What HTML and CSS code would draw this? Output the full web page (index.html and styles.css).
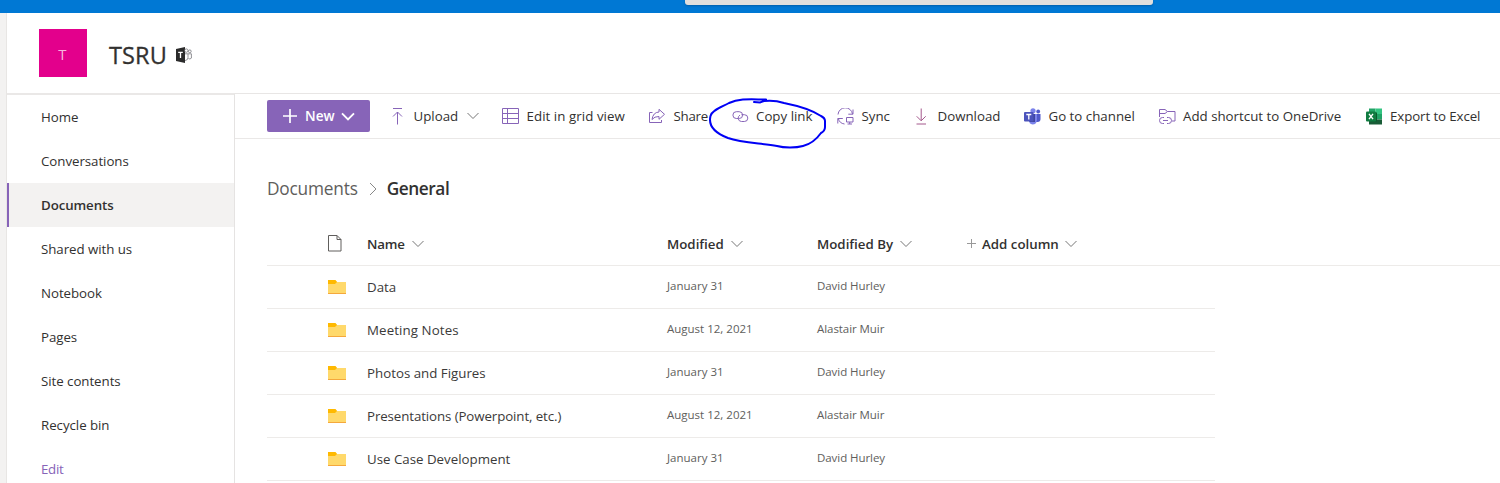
FILE: index.html
```html
<!DOCTYPE html>
<html lang="en">
<head>
<meta charset="utf-8">
<title>TSRU - Documents</title>
<link rel="stylesheet" href="styles.css">
</head>
<body>
<svg class="defs" width="0" height="0">
  <symbol id="chev" viewBox="0 0 12 8"><path d="M.5 1 6 6.5 11.5 1" fill="none" stroke="currentColor"/></symbol>
  <symbol id="folder" viewBox="0 0 18 14"><path d="M0 1.5H18V13H0z" fill="#ffd96b"/><path d="M0 13h18v1H0z" fill="#f5a83c"/><path d="M9 0h9v2H9z" fill="#fff"/><path d="M0 0h7.500l1.500 2-2 2H0z" fill="#ffb900"/></symbol>
</svg>
<div class="suite"><div class="search"></div></div>
<div class="app">
  <div class="rail"></div>
  <div class="site">
    <header class="head">
      <div class="logo">T</div>
      <h1 class="title">TSRU</h1>
      <svg class="teamsmark" width="16" height="16" viewBox="0 0 16 16"><path d="M0 2 9 0v16L0 14z" fill="#2b2b2b"/><path d="M2.2 5.3h4.6M4.5 5v6" stroke="#fff" stroke-width="1.3"/><g fill="none" stroke="#77777c" stroke-width=".8"><circle cx="10.3" cy="3.6" r="1.7"/><circle cx="13.8" cy="4.3" r="1.4"/><path d="M9 6.8h6.4v4.3q-1.4 1.6-3 .4M9 13.6q3-.4 3-3V7"/></g></svg>
    </header>
    <div class="body">
      <nav class="nav">
        <a class="item">Home</a>
        <a class="item">Conversations</a>
        <a class="item active">Documents</a>
        <a class="item">Shared with us</a>
        <a class="item">Notebook</a>
        <a class="item">Pages</a>
        <a class="item">Site contents</a>
        <a class="item">Recycle bin</a>
        <a class="item edit">Edit</a>
      </nav>
      <main class="main">
        <div class="bar">
          <button class="new"><svg width="16" height="16" viewBox="0 0 16 16"><path d="M8 1v14M1 8h14" stroke="#fff" stroke-width="1.7"/></svg><span>New</span><svg width="14" height="9" viewBox="0 0 14 9"><path d="M1 1.3 7 7.3 13 1.3" fill="none" stroke="#fff" stroke-width="1.9"/></svg></button>
          <div class="cmd"><svg class="ic" viewBox="0 0 17 17"><path d="M4 .5h9M8.500 16.500V4M4 8.500 8.500 4 13 8.500"/></svg><span>Upload</span><svg class="chev" width="12" height="8"><use href="#chev"/></svg></div>
          <div class="cmd"><svg class="ic" viewBox="0 0 17 17"><path d="M.5 .5h16v15H.5zM.5 5.500h16M.5 10.500h16M5.500 .5v15"/></svg><span class="t-grid">Edit in grid view</span></div>
          <div class="cmd"><svg class="ic" viewBox="0 0 17 17"><path d="M3.500 4.500H.5v10h12V12M10 1.300l5.500 5-5.500 5V8.500Q5.500 8.300 3 11.500 4 4.300 10 4z"/></svg><span class="t-share">Share</span></div>
          <div class="cmd"><svg class="ic" viewBox="0 0 17 17"><path d="M6.500 10.500H4.300a3.400 3.400 0 0 1 0-6.800h2.900a3.400 3.400 0 0 1 0 6.800M9.500 6.700h2.900a3.400 3.400 0 0 1 0 6.800H9.500a3.400 3.400 0 0 1-1.500-6.400"/></svg><span class="t-copy">Copy link</span></div>
          <div class="cmd"><svg class="ic" viewBox="0 0 17 17"><path d="M1 6.500A7.300 7.300 0 0 1 15.500 6M16 1.500v4.700h-4.700M7.500 16A7.300 7.300 0 0 1 1.300 10.500M.8 15.500v-5h5M9.500 9.500h6.500v4.500H9.500zM10.500 16h4.500M12.700 14v2"/></svg><span>Sync</span></div>
          <div class="cmd"><svg class="ic rose" viewBox="0 0 17 17"><path d="M3.500 16h9.500M8.200 .5v12M3.700 8.300l4.500 4.500 4.500-4.500"/></svg><span>Download</span></div>
          <div class="cmd"><svg class="ic solid" viewBox="0 0 17 17"><circle cx="9" cy="2.800" r="2.600" fill="#7b83eb"/><circle cx="14.200" cy="3.500" r="1.900" fill="#5059c9"/><path d="M11 6h5.500v5q0 3-3 3H11z" fill="#5059c9"/><path d="M5 6h8v6q-.5 4.500-4.500 4.500Q5 16 5 12z" fill="#7b83eb"/><path d="M5 6h6v8H5.500z" fill="#3f469f"/><rect x="0" y="4" width="9.500" height="9.500" rx="1" fill="#4b53bc"/><path d="M2.300 6.500h5M4.800 6.500v5" stroke="#fff" stroke-width="1.300"/></svg><span>Go to channel</span></div>
          <div class="cmd"><svg class="ic" viewBox="0 0 17 17"><path d="M.5 9V1.500H6L8.500 3.500H16v9.500h-3M.5 5.500H6L8.500 3.500M5 9.500H3.500a3 3 0 0 0 0 6H5M8 9.500h1.500a3 3 0 0 1 0 6H8M4 12.500h5"/></svg><span class="t-short">Add shortcut to OneDrive</span></div>
          <div class="cmd"><svg class="ic solid" viewBox="0 0 17 17"><path d="M3 .5h6.500V6H3z" fill="#21a366"/><path d="M9.500 .5H16V6H9.500z" fill="#33c481"/><path d="M3 6h6.500v5.500H3z" fill="#107c41"/><path d="M9.500 6H16v5.500H9.500z" fill="#21a366"/><path d="M3 11.500h13v5H3z" fill="#185c37"/><path d="M5 4.500h6v9H5z" fill="#0b5a2e"/><rect x="0" y="3.500" width="10" height="10" rx="1" fill="#107c41"/><path d="M3 5.800 7 11.200M7 5.800 3 11.200" stroke="#fff" stroke-width="1.400"/></svg><span class="t-excel">Export to Excel</span></div>
          <svg class="ink" width="122" height="54" viewBox="0 0 122 54"><path d="M46 6L52 6.500 56 5C64 4 70 5 76 7C91 10 104 14 113 20Q117 22 117 25V31Q117 35 113 37C108 44 103 48 95 50C88 52 76 52 69 50C52 47 34 47 20 42C7 37 0 30 2.500 20C4 14 14 11 21 7C32 2 44 3.500 58 3.500"/></svg>
        </div>
        <div class="crumb"><span>Documents</span><svg width="8" height="14" viewBox="0 0 8 14"><path d="M1 1l6 6-6 6" fill="none" stroke="#888"/></svg><b>General</b></div>
        <div class="row hrow">
          <svg class="fi" width="14" height="17" viewBox="0 0 14 17"><path d="M.5 .5h8.500l4 4v11.500H.5zM9 .5v4h4" fill="none" stroke="#605e5c"/></svg>
          <div class="h"><span class="t-name">Name</span><svg width="12" height="8"><use href="#chev"/></svg></div>
          <div class="h"><span>Modified</span><svg width="12" height="8"><use href="#chev"/></svg></div>
          <div class="h"><span>Modified By</span><svg width="12" height="8"><use href="#chev"/></svg></div>
          <div class="h h-add"><svg width="9" height="9" viewBox="0 0 9 9"><path d="M4.500 0v9M0 4.500h9" stroke="#999"/></svg><span>Add column</span><svg width="12" height="8"><use href="#chev"/></svg></div>
        </div>
        <div class="row"><svg class="fi" width="18" height="14"><use href="#folder"/></svg><span class="name">Data</span><span class="meta">January 31</span><span class="meta by">David Hurley</span></div>
        <div class="row"><svg class="fi" width="18" height="14"><use href="#folder"/></svg><span class="name wide">Meeting Notes</span><span class="meta">August 12, 2021</span><span class="meta by">Alastair Muir</span></div>
        <div class="row"><svg class="fi" width="18" height="14"><use href="#folder"/></svg><span class="name">Photos and Figures</span><span class="meta">January 31</span><span class="meta by">David Hurley</span></div>
        <div class="row"><svg class="fi" width="18" height="14"><use href="#folder"/></svg><span class="name long">Presentations (Powerpoint, etc.)</span><span class="meta">August 12, 2021</span><span class="meta by">Alastair Muir</span></div>
        <div class="row"><svg class="fi" width="18" height="14"><use href="#folder"/></svg><span class="name">Use Case Development</span><span class="meta">January 31</span><span class="meta by">David Hurley</span></div>
      </main>
    </div>
  </div>
</div>
</body>
</html>
```
FILE: styles.css
```css
* { box-sizing: border-box; }
body { margin: 0; height: 483px; overflow: hidden; background: #fff; color: #323130; font: 13.3px/20px "Open Sans", "Noto Sans", sans-serif; white-space: nowrap; }
.defs { position: absolute; }
svg { flex: none; display: block; }
.suite { height: 13px; background: #0078d4; padding-left: 685px; }
.search { width: 468px; height: 5px; background: #e1dfdd; border-radius: 0 0 3px 3px; box-shadow: 0 1px 2px #0060ac; }
.app { display: flex; height: 470px; }
.rail { width: 7px; background: #f3f2f1; border-right: 1px solid #e8e6e4; }
.site { flex: 1; }
.head { height: 80px; display: flex; align-items: center; padding-left: 32px; }
.logo { width: 48px; height: 48px; background: #e3008c; color: #f6b4dc; font-size: 15px; display: flex; align-items: center; justify-content: center; padding: 2px 1px 0 0; }
.title { margin: 3px 0 0 22px; width: 67px; font-size: 23.5px; line-height: 32px; font-weight: 500; letter-spacing: .1px; color: #323130; -webkit-text-stroke: .3px #323130; }
.teamsmark { margin-top: 4px; }
.body { display: flex; height: 390px; }
.nav { width: 228px; border-top: 2px solid #eae8e7; border-right: 1px solid #e5e3e2; }
.item { display: flex; align-items: center; height: 44px; padding-left: 34px; letter-spacing: -.05px; }
.active { background: #f3f2f1; border-left: 2px solid #8764b8; padding-left: 32px; font-weight: 600; letter-spacing: -.1px; }
.edit { color: #8764b8; letter-spacing: -.3px; }
.main { flex: 1; border-top: 1px solid #e8e6e5; }
.bar { position: relative; height: 45px; border-bottom: 1px solid #eae8e7; padding-left: 32px; display: grid; grid-template-columns: 122px 113px 147px 83px 105px 76px 111px 135px 207px 1fr; align-items: center; }
.new { width: 103px; height: 32px; border: 0; border-radius: 2px; background: #8764b8; color: #fff; font: 600 13.6px/20px "Open Sans", sans-serif; padding: 0 0 0 15px; display: flex; align-items: center; gap: 7px; }
.new span { width: 29px; }
.cmd { display: flex; align-items: center; }
.cmd span { margin-left: 7.5px; }
.cmd .t-grid { letter-spacing: .06px; }
.cmd .t-share { letter-spacing: -.25px; }
.cmd .t-copy { margin-left: 7px; }
.cmd .t-short { margin-left: 7px; }
.cmd .t-excel { margin-left: 7px; letter-spacing: -.1px; }
.ic { width: 17px; height: 17px; fill: none; stroke: #8764b8; stroke-width: 1; }
.rose { stroke: #a4588c; }
.solid { stroke: none; }
.chev { margin-left: 8.5px; color: #777; }
.ink { position: absolute; left: 474px; top: 2px; fill: none; stroke: #0000f5; stroke-width: 2; stroke-linecap: round; overflow: visible; margin-left: -1px; }
.crumb { height: 50px; margin-top: 24px; padding: 1px 0 0 32px; display: flex; align-items: center; font-size: 17.3px; letter-spacing: -.2px; color: #605e5c; font-weight: 400; }
.crumb svg { margin: 0 10px 0 11px; }
.crumb b { font-weight: 600; letter-spacing: -.45px; color: #323130; }
.row { display: grid; grid-template-columns: 61px 39px 300px 150px 150px 1fr; align-items: center; height: 43px; width: 948px; margin-left: 32px; border-bottom: 1px solid #edebe9; }
.row .fi { grid-column: 2; }
.hrow { height: 53px; width: auto; padding-top: 9px; }
.h { display: flex; align-items: center; gap: 7px; font-weight: 600; }
.h svg { color: #777; }
.t-name { letter-spacing: -.2px; }
.h-add { gap: 6px; }
.name { color: #3b3a39; }
.wide { letter-spacing: .1px; }
.long { letter-spacing: -.1px; }
.meta { font-size: 11.5px; color: #605e5c; padding-bottom: 2px; }
.by { letter-spacing: -.06px; }
```
